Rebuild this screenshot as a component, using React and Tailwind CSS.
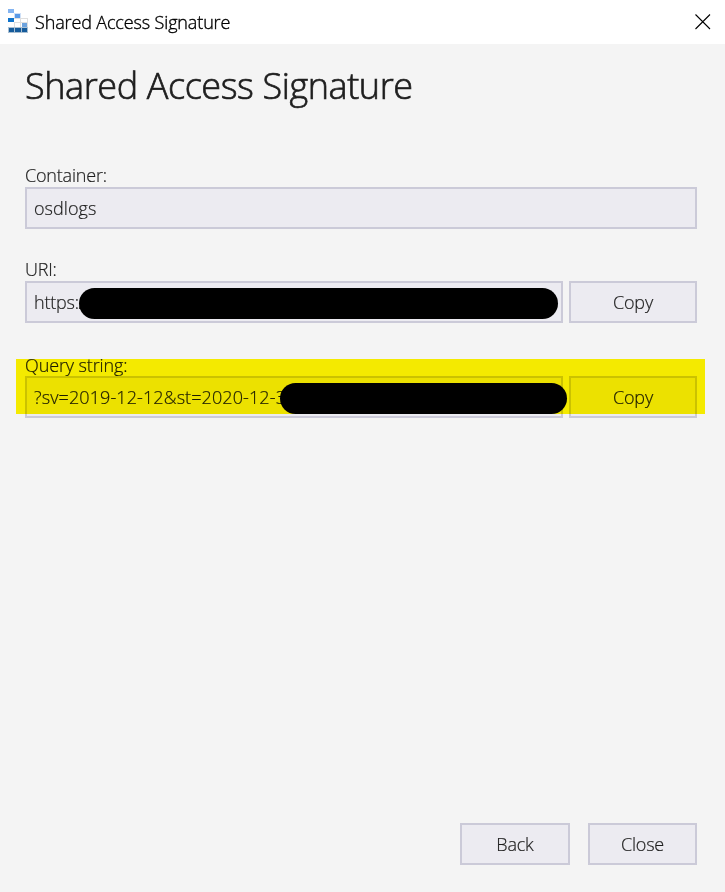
import React from "react";

const BOX = "box-border h-[42px] border-2 border-[#cbcad8] bg-[#ecebf1]";

function StorageIcon() {
  return (
    <svg width="20" height="24" viewBox="0 0 20 24" shapeRendering="crispEdges">
      <rect x="6" y="4" width="7" height="5" fill="#cfe0f7" />
      <rect y="0" width="6" height="4" fill="#84b4f1" />
      <rect x="7" y="5" width="5" height="4" fill="#5b9ae6" />
      <rect y="9" width="6" height="4" fill="#0f74cc" />
      <path d="M6 9h14v1H6zM6 13h14v1H6zM6 18h8v1H6zM6 14h1v4H6zM12 9h1v9h-1zM19 9h1v9h-1z" fill="#dfdfdf" />
      <rect x="14" y="14" width="5" height="4" fill="#6da3de" />
      <rect y="18" width="20" height="6" fill="#a9bfd2" />
      <rect x="1" y="19" width="5" height="4" fill="#155b9b" />
      <rect x="7" y="19" width="6" height="4" fill="#155b9b" />
      <rect x="14" y="19" width="5" height="4" fill="#155b9b" />
    </svg>
  );
}

function Label({ children, className = "" }) {
  return <div className={"h-6 whitespace-nowrap leading-6 " + className}>{children}</div>;
}

function Button({ children, className = "" }) {
  return (
    <button className={BOX + " flex items-center justify-center pt-px " + className}>
      {children}
    </button>
  );
}

function Field({ children, className = "" }) {
  return (
    <div className={BOX + " relative flex items-center pl-[7px] pt-px whitespace-nowrap " + className}>
      {children}
    </div>
  );
}

export default function App() {
  return (
    <div className="flex h-[892px] w-[725px] flex-col overflow-hidden bg-[#f4f4f4] font-['Open_Sans','Noto_Sans',sans-serif] text-[18px] font-light tracking-[-0.2px] text-[#1e1e1e] [-webkit-text-stroke:0.2px_#1e1e1e]">
      <header className="flex h-11 shrink-0 items-center justify-between bg-white pl-2 pr-[14px] text-black">
        <div className="flex items-center gap-[7px]">
          <div className="-mt-[3px]">
            <StorageIcon />
          </div>
          <span className="mt-px whitespace-nowrap text-[18px] tracking-[-0.14px] [-webkit-text-stroke:0.35px_#000]">Shared Access Signature</span>
        </div>
        <svg width="16" height="16" viewBox="0 0 16 16" className="-mt-px" stroke="#000" strokeWidth="1.1">
          <path d="M.5.5 15 15M15 .5.5 15" />
        </svg>
      </header>

      <main className="flex grow flex-col pl-[25px] pr-7">
        <h1 className="mt-[18px] h-12 whitespace-nowrap text-[36px] leading-[48px] tracking-[-0.4px] [-webkit-text-stroke:0.7px_#1e1e1e]">
          Shared Access Signature
        </h1>

        <section className="mt-[53px]">
          <Label>Container:</Label>
          <Field>
            <span className="tracking-[0.05px]">osdlogs</span>
          </Field>
        </section>

        <section className="mt-[28px]">
          <Label>URI:</Label>
          <div className="flex gap-[6px]">
            <Field className="w-[538px]">
              https:/
              <div className="absolute left-[52px] top-[5px] h-[31px] w-[479px] rounded-full bg-black" />
            </Field>
            <Button className="w-32">Copy</Button>
          </div>
        </section>

        <section className="relative mt-[29px]">
          <Label className="pt-px tracking-[-0.12px]">Query string:</Label>
          <div className="flex gap-[6px]">
            <Field className="w-[538px]">
              <span className="tracking-[0.1px]">?sv=2019-12-12&amp;st=2020-12-3</span>
              <div className="absolute left-[253px] top-[5px] h-[31px] w-[287px] rounded-full bg-black" />
            </Field>
            <Button className="w-32">Copy</Button>
          </div>
          <div className="absolute -left-[9px] top-[7px] h-[55px] w-[689px] bg-[#fff500] mix-blend-multiply" />
        </section>

        <footer className="mb-[27px] mt-auto flex justify-end gap-[18px]">
          <Button className="w-[110px]">Back</Button>
          <Button className="w-[109px]">Close</Button>
        </footer>
      </main>
    </div>
  );
}
